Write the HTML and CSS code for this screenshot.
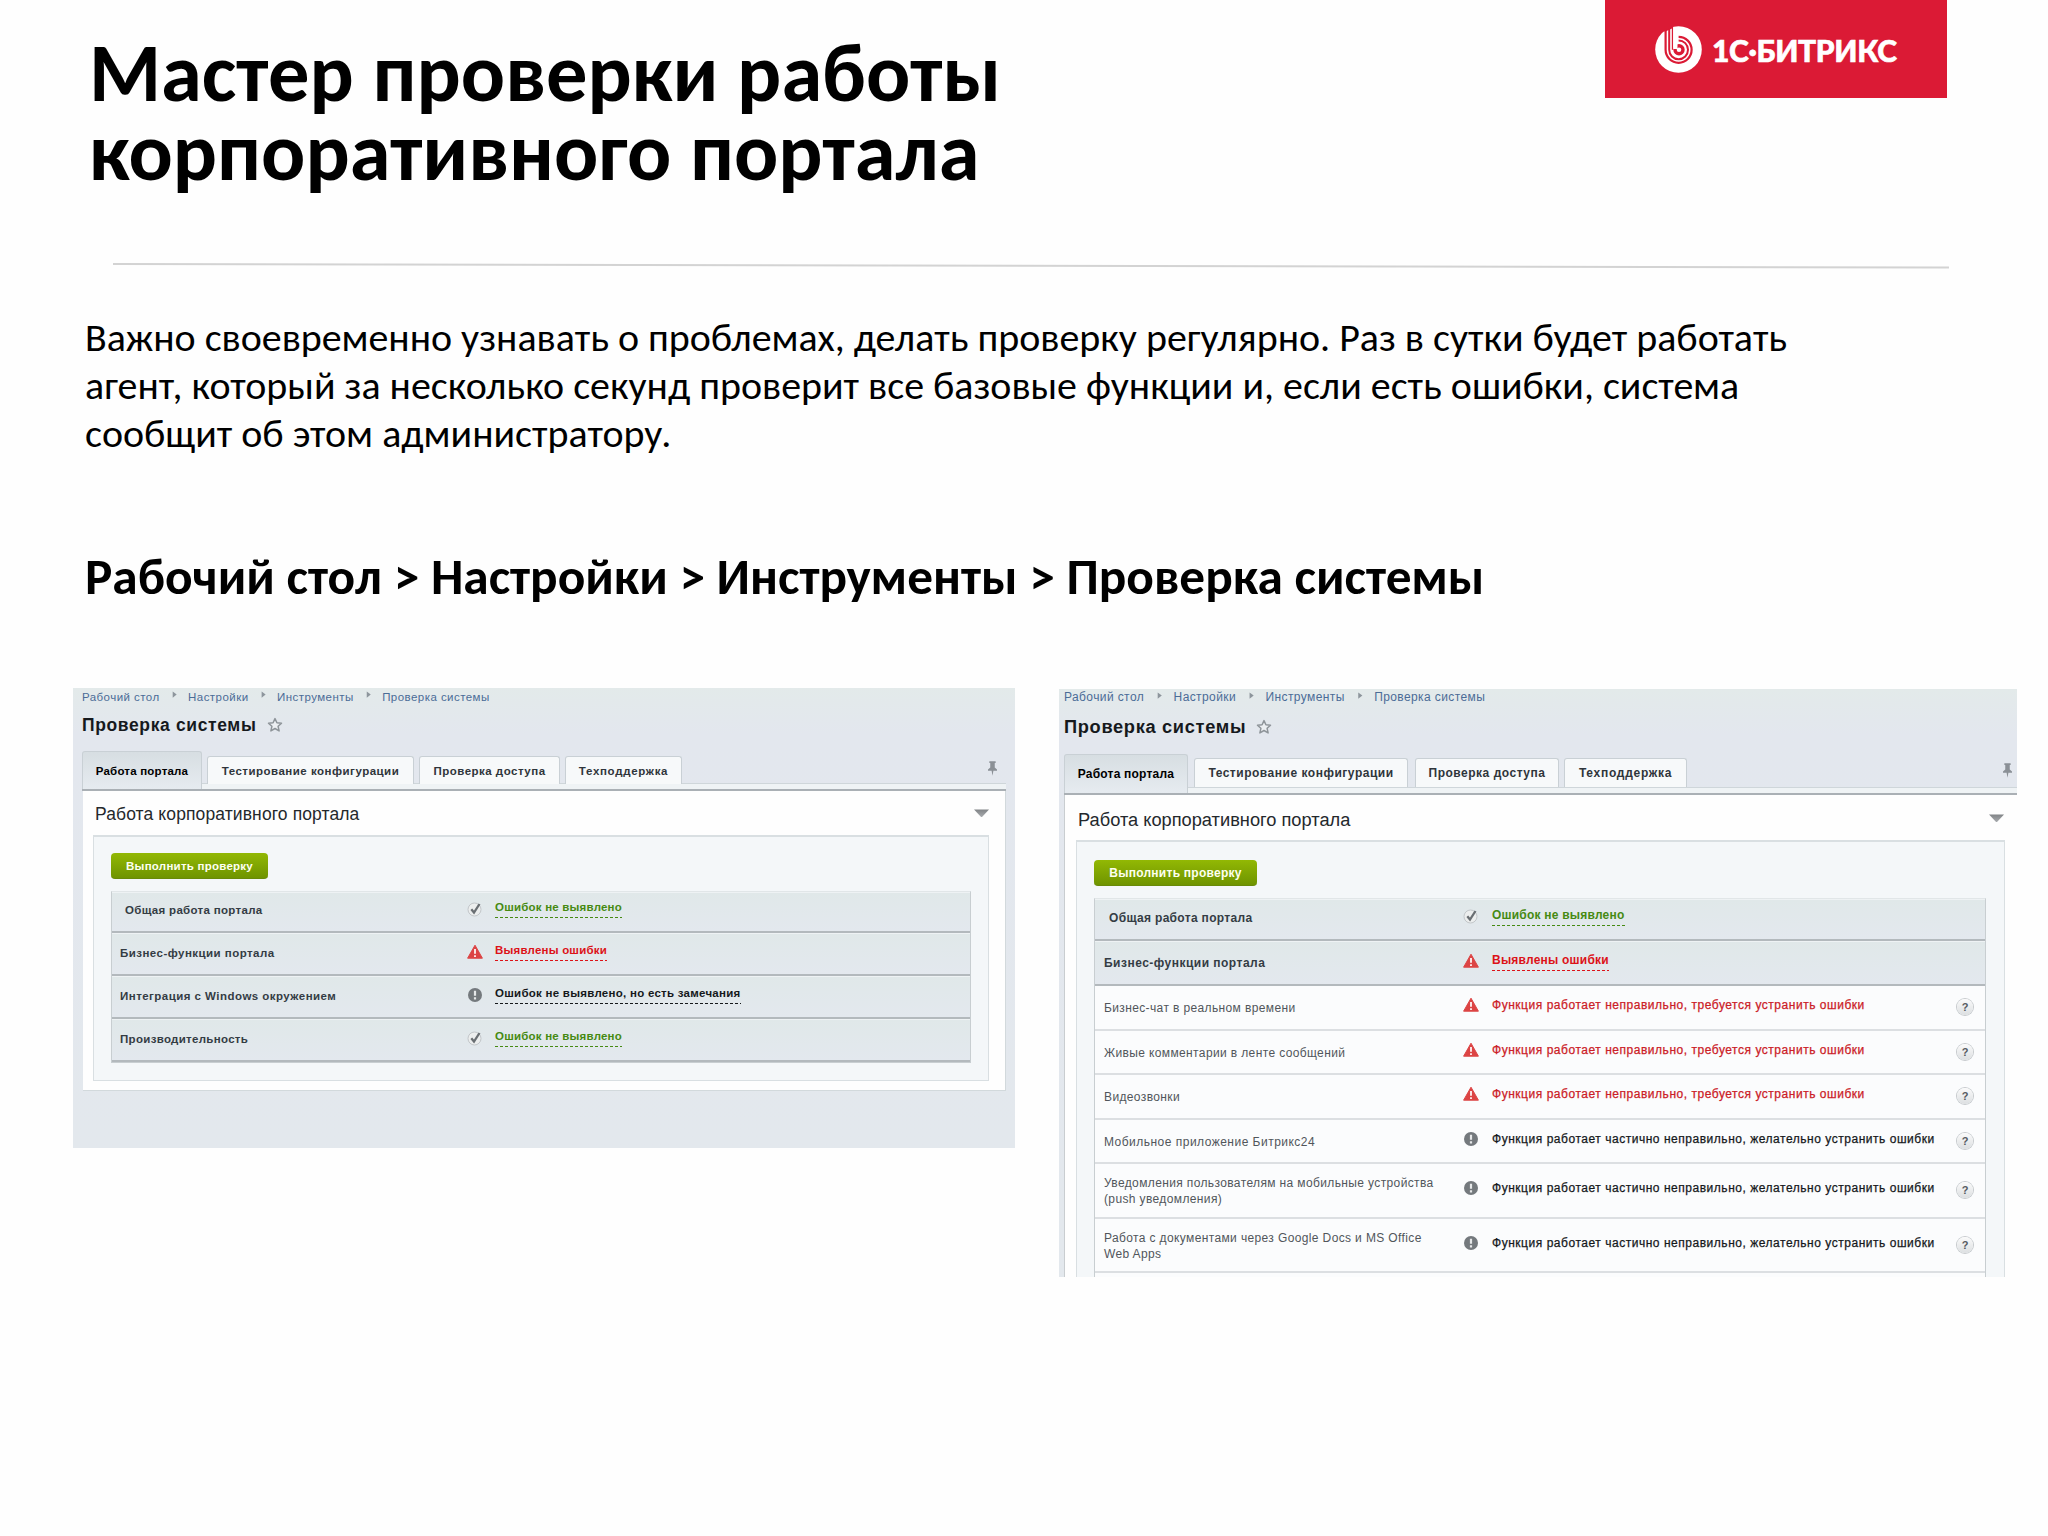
FILE: index.html
```
<!DOCTYPE html>
<html lang="ru">
<head>
<meta charset="utf-8">
<title>Мастер проверки работы корпоративного портала</title>
<link rel="stylesheet" href="styles.css">
</head>
<body>
<svg class="sprite" width="0" height="0">
  <symbol id="star" viewBox="0 0 16 16"><path d="M8 1.600l1.900 4.200 4.600.4-3.400 3.100 1 4.600L8 11.500l-4.100 2.400 1-4.600L1.500 6.200l4.600-.4z" fill="#eceff2" stroke="#8e9499" stroke-width="1.500" stroke-linejoin="round"/></symbol>
  <symbol id="pin" viewBox="0 0 10 16"><path d="M1.500 0h7v2h-1v5l2.500 2v1.500H6L5 16l-1-5.500H0V9l2.500-2V2h-1z" fill="#8b9096"/></symbol>
  <symbol id="ok" viewBox="0 0 16 16"><circle cx="7.500" cy="8.500" r="6.500" fill="#eceeee" stroke="#c3c7ca"/><path d="M4.300 8.200l2.700 3.300L12.500 3" fill="none" stroke="#6a6f73" stroke-width="2.300"/></symbol>
  <symbol id="err" viewBox="0 0 16 16"><path d="M8 1.200l7.400 13H.6z" fill="#dc4444" stroke="#dc4444" stroke-linejoin="round"/><path d="M8 5v4.800M8 11.200v1.900" stroke="#fbe3e3" stroke-width="2"/></symbol>
  <symbol id="warn" viewBox="0 0 16 16"><circle cx="8" cy="8" r="7" fill="#74797d"/><path d="M8 3.800v5M8 10.300v2.200" stroke="#e6e8e9" stroke-width="2.200"/></symbol>
</svg>

<header class="header">
  <h1 class="title">Мастер проверки работы<br>корпоративного портала</h1>
  <div class="brand">
    <svg class="brand-mark" viewBox="0 0 47 47">
      <circle cx="23.500" cy="23.500" r="23.300" fill="#fff"/>
      <path d="M9.500 0H18v2l-8.500 4z" fill="#db1a35"/>
      <g fill="none" stroke="#db1a35">
        <path d="M10.600 3v20.800a13 13 0 1 0 13-13" stroke-width="2.200"/>
        <path d="M14.200 2v21.800a9.400 9.400 0 1 0 9.400-9.400" stroke-width="2"/>
        <path d="M17.500 1v22.800" stroke-width="1.400"/>
        <circle cx="24" cy="23.800" r="4" stroke-width="3.400"/>
      </g>
      <path d="M18.200 1.200h4.300V23h-4.300z" fill="#fff"/>
    </svg>
    <span class="brand-name">1С·БИТРИКС</span>
  </div>
</header>

<svg class="rule" viewBox="0 0 1836 8"><path d="M0 2L1836 5.500" stroke="#d3d3d3" stroke-width="2"/></svg>

<p class="lead">Важно своевременно узнавать о проблемах, делать проверку регулярно. Раз в сутки будет работать<br>агент, который за несколько секунд проверит все базовые функции и, если есть ошибки, система<br>сообщит об этом администратору.</p>
<h2 class="path">Рабочий стол &gt; Настройки &gt; Инструменты &gt; Проверка системы</h2>

<div class="screens">
  <section class="shot shot-summary">
    <nav class="crumbs"><span>Рабочий стол</span><i></i><span>Настройки</span><i></i><span>Инструменты</span><i></i><span>Проверка системы</span></nav>
    <div class="page-title"><span>Проверка системы</span><svg class="star"><use href="#star"/></svg></div>
    <div class="tabs">
      <span class="tab active">Работа портала</span><span class="tab tab-config">Тестирование конфигурации</span><span class="tab tab-access">Проверка доступа</span><span class="tab tab-support">Техподдержка</span>
      <svg class="pin"><use href="#pin"/></svg>
    </div>
    <div class="content">
      <div class="heading"><span>Работа корпоративного портала</span><i class="caret"></i></div>
      <div class="box">
        <span class="button">Выполнить проверку</span>
        <div class="table">
          <div class="row group first"><span class="label">Общая работа портала</span><svg class="icon"><use href="#ok"/></svg><span class="status link good">Ошибок не выявлено</span></div>
          <div class="row group"><span class="label wide">Бизнес-функции портала</span><svg class="icon"><use href="#err"/></svg><span class="status link bad">Выявлены ошибки</span></div>
          <div class="row group"><span class="label wide">Интеграция с Windows окружением</span><svg class="icon"><use href="#warn"/></svg><span class="status link note">Ошибок не выявлено, но есть замечания</span></div>
          <div class="row group"><span class="label">Производительность</span><svg class="icon"><use href="#ok"/></svg><span class="status link good">Ошибок не выявлено</span></div>
        </div>
      </div>
    </div>
  </section>

  <section class="shot shot-detail">
    <nav class="crumbs"><span>Рабочий стол</span><i></i><span>Настройки</span><i></i><span>Инструменты</span><i></i><span>Проверка системы</span></nav>
    <div class="page-title"><span>Проверка системы</span><svg class="star"><use href="#star"/></svg></div>
    <div class="tabs">
      <span class="tab active">Работа портала</span><span class="tab tab-config">Тестирование конфигурации</span><span class="tab tab-access">Проверка доступа</span><span class="tab tab-support">Техподдержка</span>
      <svg class="pin"><use href="#pin"/></svg>
    </div>
    <div class="content">
      <div class="heading"><span>Работа корпоративного портала</span><i class="caret"></i></div>
      <div class="box">
        <span class="button">Выполнить проверку</span>
        <div class="table">
          <div class="row group first"><span class="label">Общая работа портала</span><svg class="icon"><use href="#ok"/></svg><span class="status link good">Ошибок не выявлено</span></div>
          <div class="row group"><span class="label wide">Бизнес-функции портала</span><svg class="icon"><use href="#err"/></svg><span class="status link bad">Выявлены ошибки</span></div>
          <div class="row"><span class="label">Бизнес-чат в реальном времени</span><svg class="icon"><use href="#err"/></svg><span class="status bad">Функция работает неправильно, требуется устранить ошибки</span><span class="help">?</span></div>
          <div class="row"><span class="label">Живые комментарии в ленте сообщений</span><svg class="icon"><use href="#err"/></svg><span class="status bad">Функция работает неправильно, требуется устранить ошибки</span><span class="help">?</span></div>
          <div class="row"><span class="label">Видеозвонки</span><svg class="icon"><use href="#err"/></svg><span class="status bad">Функция работает неправильно, требуется устранить ошибки</span><span class="help">?</span></div>
          <div class="row"><span class="label wide">Мобильное приложение Битрикс24</span><svg class="icon"><use href="#warn"/></svg><span class="status note">Функция работает частично неправильно, желательно устранить ошибки</span><span class="help">?</span></div>
          <div class="row tall"><span class="label">Уведомления пользователям на мобильные устройства<br>(push уведомления)</span><svg class="icon"><use href="#warn"/></svg><span class="status note">Функция работает частично неправильно, желательно устранить ошибки</span><span class="help">?</span></div>
          <div class="row tall"><span class="label">Работа с документами через Google Docs и MS Office<br>Web Apps</span><svg class="icon"><use href="#warn"/></svg><span class="status note">Функция работает частично неправильно, желательно устранить ошибки</span><span class="help">?</span></div>
        </div>
      </div>
    </div>
  </section>
</div>
</body>
</html>
```
FILE: styles.css
```
* { box-sizing: border-box; }
body {
  margin: 0;
  width: 2048px;
  height: 1536px;
  overflow: hidden;
  background: #fefefe;
  color: #000;
  font-family: Carlito, Calibri, Lato, sans-serif;
}
svg, i { display: block; flex: none; }
.sprite { display: none; }

/* Slide heading */
.header {
  display: flex;
  justify-content: space-between;
  height: 262px;
  padding: 0 101px 0 89px;
}
.title {
  margin: 0;
  padding-top: 33px;
  font-size: 82.500px;
  line-height: 79px;
  font-weight: 700;
  white-space: nowrap;
}
.brand {
  display: flex;
  align-items: center;
  width: 342px;
  height: 98px;
  padding-left: 50px;
  background: #db1a35;
  color: #fff;
}
.brand-mark { width: 47px; height: 47px; }
.brand-name {
  margin-left: 10px;
  padding-top: 2px;
  font: 900 30px/36px Lato, sans-serif;
  letter-spacing: -.35px;
  -webkit-text-stroke: .6px #fff;
}
.rule { width: 1836px; height: 8px; margin-left: 113px; }
.lead {
  margin: 44px 0 0 85px;
  font-size: 39.950px;
  line-height: 47.800px;
  white-space: nowrap;
}
.path {
  margin: 90px 0 0 85px;
  font-size: 51.350px;
  line-height: 60px;
  height: 60px;
  white-space: nowrap;
}

/* Admin panel screens */
.screens {
  display: flex;
  align-items: flex-start;
  gap: 44px;
  padding-left: 73px;
  margin-top: 81px;
}
.shot {
  background: linear-gradient(#e3eaea, #e3e7ee 45px, #e3e8ed);
  font-family: "Liberation Sans", Arial, sans-serif;
  overflow: hidden;
  white-space: nowrap;
}
.shot-summary {
  width: 942px;
  height: 460px;
  padding: 0 9px 0 10px;
  font-size: 11.500px;
}
.shot-detail {
  width: 958px;
  height: 588px;
  margin-top: 1px;
  padding-left: 5px;
  font-size: 12px;
}

.crumbs {
  display: flex;
  height: 19px;
  line-height: 18px;
  color: #4b6c97;
  letter-spacing: .033em;
}
.crumbs i {
  width: 28px;
  height: 12px;
  background: #8d959c;
  clip-path: polygon(46% 25%, 60% 50%, 46% 77%);
}
.page-title {
  display: flex;
  align-items: center;
  height: 24px;
  margin-top: 6px;
  font-size: 1.520em;
  font-weight: 700;
  letter-spacing: .037em;
  color: #16191d;
}
.star { width: 16px; height: 16px; margin-left: 10px; }

.tabs {
  display: flex;
  align-items: flex-end;
  border-bottom: 2px solid #aab0b5;
  font-weight: 700;
  color: #2f353b;
  letter-spacing: .043em;
  background: linear-gradient(#cfd6da 0 1px, #eff3f5 1px) 0 100% / 100% 6px no-repeat;
}
.tab {
  display: flex;
  align-items: center;
  justify-content: center;
  height: 29px;
  margin: 0 0 6px 6px;
  border: 1px solid #c9d0d5;
  border-bottom: 0;
  border-radius: 3px 3px 0 0;
  background: #f7f9fa;
}
.tab.active {
  height: 39px;
  margin: 0;
  background: linear-gradient(#d7dee2, #e6ebf0);
  color: #000;
  letter-spacing: .018em;
}
.tab-support { letter-spacing: .06em; }
.pin { margin-left: auto; }

.content { background: #fefefe; }
.heading {
  display: flex;
  justify-content: space-between;
  font-size: 1.520em;
  color: #24282c;
  letter-spacing: .007em;
}
.caret {
  width: 15px;
  height: 8px;
  background: linear-gradient(#7e8184, #a8abae);
  clip-path: polygon(0 0, 100% 0, 50% 100%);
}
.box {
  border: 1px solid #d9dfe2;
  border-top-width: 2px;
  background: #f4f7f9;
}
.button {
  display: flex;
  align-items: center;
  justify-content: center;
  height: 26px;
  border-radius: 4px;
  background: linear-gradient(#92b804, #6f9400);
  border-bottom: 1px solid #688a08;
  color: #fdfff0;
  font-weight: 700;
  letter-spacing: .021em;
}
.table { border: 1px solid #c8ced1; border-top-color: #e1e6e8; }
.row {
  display: grid;
  align-items: start;
  border-bottom: 2px solid #dcdfe2;
  background: #fbfcfd;
  color: #51565b;
  line-height: 16px;
}
.row.group {
  border-bottom-color: #b3b9bd;
  border-top: 1px solid #eef2f4;
  background: linear-gradient(#e0e8e9, #e3e8ee);
  color: #343c44;
  font-weight: 700;
}
.label { letter-spacing: .031em; }
.group .label { letter-spacing: .027em; }
.label.wide, .group .label.wide { letter-spacing: .040em; }
.icon { width: 16px; height: 16px; }
.status {
  justify-self: start;
  letter-spacing: .044em;
  -webkit-text-stroke: .25px currentColor;
}
.link {
  letter-spacing: .018em;
  padding-bottom: 3px;
  background: repeating-linear-gradient(90deg, currentColor 0 3px, transparent 3px 5px) 0 100% / 100% 1px no-repeat;
  -webkit-text-stroke: 0;
}
.link.note { letter-spacing: .023em; }
.good { color: #468a12; }
.bad { color: #cb2027; }
.group .bad { color: #dc1218; }
.note { color: #15181b; }
.help {
  width: 16px;
  height: 16px;
  border-radius: 50%;
  background: linear-gradient(#fbfbfb, #dcdfe1);
  box-shadow: 0 0 0 1px #c6cacd;
  color: #555b61;
  font-weight: 700;
  font-size: 11px;
  line-height: 16px;
  text-align: center;
}

/* Summary screen metrics */
.shot-summary .crumbs,
.shot-summary .page-title { margin-left: -1px; }
.shot-summary .crumbs { letter-spacing: .039em; }
.shot-summary .crumbs i { width: 28.500px; }
.shot-summary .tabs { height: 54px; margin-left: -1px; }
.shot-summary .tab { height: 28px; margin: 0 0 5px 5px; padding-top: 1px; }
.shot-summary .tab.active { width: 120px; height: 38px; margin: 0; }
.shot-summary .tab-config { width: 207px; }
.shot-summary .tab-access { width: 141px; }
.shot-summary .tab-support { width: 117px; }
.shot-summary .pin { width: 9px; height: 15px; margin: 0 9px 13px auto; }
.shot-summary .content { height: 300px; padding: 11px 16px 0 10px; border: 1px solid #d2d9dc; border-width: 0 1px 1px 0; }
.shot-summary .heading { height: 33px; line-height: 25px; padding-left: 2px; }
.shot-summary .caret { margin: 7px 0 0 0; }
.shot-summary .box { height: 246px; padding: 16px 17px 0; }
.shot-summary .button { width: 157px; }
.shot-summary .table { margin-top: 12px; }
.shot-summary .row {
  height: 43px;
  grid-template-columns: 347px 28px 1fr;
  padding: 10px 0 0 8px;
}
.shot-summary .row:first-child { height: 41px; padding-top: 8px; }
.shot-summary .label { padding-top: 1px; }
.shot-summary .status { margin-top: -2px; }

/* Detail screen metrics */
.shot-detail .crumbs { line-height: 16px; }
.shot-detail .crumbs i { width: 29.500px; }
.shot-detail .page-title { margin-top: 7px; }
.shot-detail .tabs { height: 56px; }
.shot-detail .tab.active { width: 124px; }
.shot-detail .tab-config { width: 214px; }
.shot-detail .tab-access { width: 144px; margin-left: 7px; }
.shot-detail .tab-support { width: 123px; margin-left: 5px; }
.shot-detail .pin { width: 9px; height: 15px; margin: 0 5px 15px auto; }
.shot-detail .content { height: 490px; padding: 12px 12px 0 11px; border-left: 1px solid #c9cdd0; }
.shot-detail .heading { height: 33px; line-height: 25px; padding-left: 2px; letter-spacing: 0; }
.shot-detail .caret { margin: 7px 1px 0 0; }
.shot-detail .box { height: 460px; padding: 18px 18px 0 17px; }
.shot-detail .button { width: 163px; }
.shot-detail .table { margin-top: 12px; height: 400px; background: #fbfcfd; }
.shot-detail .row {
  height: 44.600px;
  grid-template-columns: 359px 29px 1fr 28px;
  padding: 11px 0 0 9px;
}
.shot-detail .row:first-child { height: 42px; padding-top: 8px; }
.shot-detail .row.tall { height: 54.400px; padding-top: 16px; }
.shot-detail .label { padding-top: 3px; }
.shot-detail .group .label { padding-top: 2px; }
.shot-detail .group .status { margin-top: -1px; }
.shot-detail .tall .label { margin-top: -8px; }
.shot-detail .help { margin-top: 2px; }
.row.first .label { padding-left: 5px; }
```
